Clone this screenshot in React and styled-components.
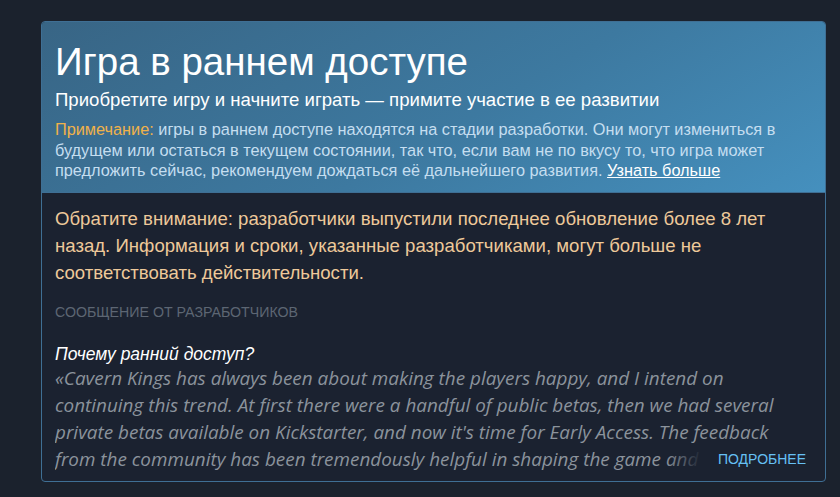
import React from "react";
import styled, { createGlobalStyle } from "styled-components";

const Global = createGlobalStyle`
  html, body { margin: 0; padding: 0; background: #1b222d; }
  body { font-family: "Liberation Sans", Arial, sans-serif; }
`;

const Page = styled.div`
  padding: 21px 14px 16px 41px;
  min-height: 497px;
  box-sizing: border-box;
`;

const Card = styled.section`
  width: 785px;
  box-sizing: border-box;
  border: 1px solid #3f6f94;
  border-radius: 4px;
  background: #1b2230;
  overflow: hidden;
`;

const Header = styled.header`
  background: linear-gradient(150deg, #386585 0%, #3d79a0 55%, #4590be 100%);
  padding: 18px 10px 11px 13px;
  border-bottom: 1px solid #3f6f94;
`;

const Title = styled.h1`
  margin: 0;
  font-size: 38.5px;
  line-height: 44px;
  font-weight: 400;
  color: #ffffff;
`;

const Subtitle = styled.div`
  margin-top: 4px;
  font-size: 18.6px;
  line-height: 24px;
  color: #ffffff;
`;

const Note = styled.p`
  margin: 7px 0 0;
  font-size: 16.3px;
  line-height: 20.5px;
  color: #c5def0;
`;

const NoteLabel = styled.span`
  color: #f0b24a;
`;

const More = styled.a`
  color: #ffffff;
  text-decoration: underline;
`;

const Body = styled.div`
  padding: 12px 14px 8px 13px;
`;

const Warning = styled.p`
  margin: 0;
  font-size: 18.6px;
  line-height: 27px;
  color: #eec99a;
`;

const SectionLabel = styled.div`
  margin-top: 18px;
  font-size: 14.2px;
  line-height: 16px;
  color: #5d6673;
  text-transform: uppercase;
`;

const Question = styled.div`
  margin-top: 23px;
  font-size: 17.5px;
  line-height: 22px;
  font-style: italic;
  color: #ffffff;
`;

const QuoteWrap = styled.div`
  position: relative;
  max-height: 108px;
  overflow: hidden;
`;

const Quote = styled.p`
  margin: 0;
  font-family: "Open Sans", "Noto Sans", sans-serif;
  font-style: italic;
  font-size: 18.9px;
  line-height: 27px;
  color: #8b939c;
`;

const ReadMore = styled.a`
  position: absolute;
  right: 0;
  bottom: 0;
  height: 27px;
  display: flex;
  align-items: center;
  padding-left: 52px;
  padding-right: 5px;
  background: linear-gradient(90deg, rgba(27, 34, 48, 0) 0px, #1b2230 36px);
  font-family: "Liberation Sans", Arial, sans-serif;
  font-size: 14px;
  color: #66c0f4;
  text-transform: uppercase;
`;

export default function App() {
  return (
    <>
      <Global />
      <Page>
        <Card>
          <Header>
            <Title>Игра в раннем доступе</Title>
            <Subtitle>Приобретите игру и начните играть — примите участие в ее развитии</Subtitle>
            <Note>
              <NoteLabel>Примечание:</NoteLabel> игры в раннем доступе находятся на стадии разработки. Они могут измениться в будущем или остаться в текущем состоянии, так что, если вам не по вкусу то, что игра может предложить сейчас, рекомендуем дождаться её дальнейшего развития. <More>Узнать больше</More>
            </Note>
          </Header>
          <Body>
            <Warning>
              Обратите внимание: разработчики выпустили последнее обновление более 8 лет назад. Информация и сроки, указанные разработчиками, могут больше не соответствовать действительности.
            </Warning>
            <SectionLabel>Сообщение от разработчиков</SectionLabel>
            <Question>Почему ранний доступ?</Question>
            <QuoteWrap>
              <Quote>
                «Cavern Kings has always been about making the players happy, and I intend on continuing this trend. At first there were a handful of public betas, then we had several private betas available on Kickstarter, and now it's time for Early Access. The feedback from the community has been tremendously helpful in shaping the game and making it what it is today.»
              </Quote>
              <ReadMore>Подробнее</ReadMore>
            </QuoteWrap>
          </Body>
        </Card>
      </Page>
    </>
  );
}
